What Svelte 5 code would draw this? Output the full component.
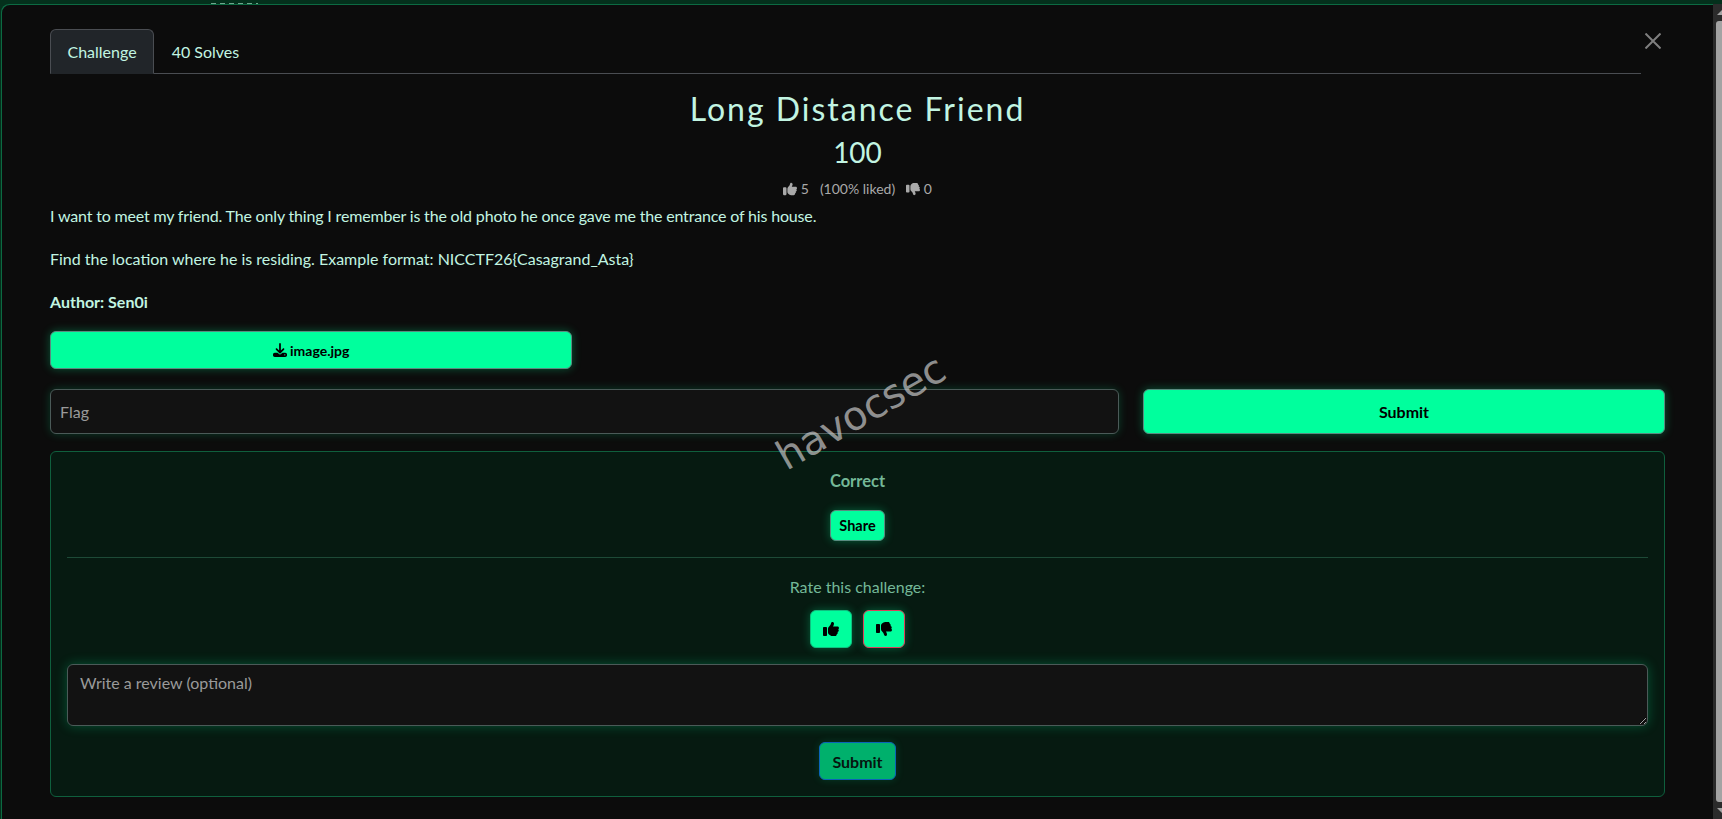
<script>
  let flag = $state('');
  let review = $state('');
</script>

{#snippet thumbUp()}
  <svg class="fa" viewBox="0 0 512 512" aria-hidden="true"><path d="M313.4 32.9c26 5.2 42.9 30.5 37.7 56.5l-2.3 11.4c-5.3 26.7-15.1 52.1-28.8 75.2H464c26.5 0 48 21.5 48 48c0 18.5-10.5 34.6-25.9 42.6C497 275.4 504 288.9 504 304c0 23.4-16.8 42.9-38.9 47.1c4.4 7.3 6.9 15.8 6.9 24.9c0 21.3-13.9 39.4-33.1 45.6c.7 3.3 1.1 6.8 1.1 10.4c0 26.5-21.5 48-48 48H294.5c-19 0-37.5-5.6-53.3-16.1l-38.5-25.7C176 420.4 160 390.4 160 358.3V320 272 247.1c0-29.2 13.3-56.7 36-75l7.4-5.9c26.5-21.2 44.6-51 51.2-84.2l2.3-11.4c5.2-26 30.5-42.9 56.5-37.7zM32 192H96c17.7 0 32 14.3 32 32V448c0 17.7-14.3 32-32 32H32c-17.7 0-32-14.3-32-32V224c0-17.7 14.3-32 32-32z"/></svg>
{/snippet}

{#snippet thumbDown()}
  <svg class="fa" viewBox="0 0 512 512" aria-hidden="true"><path d="M313.4 479.1c26-5.2 42.9-30.5 37.7-56.5l-2.3-11.4c-5.3-26.7-15.1-52.1-28.8-75.2H464c26.5 0 48-21.5 48-48c0-18.5-10.5-34.6-25.9-42.6C497 236.6 504 223.1 504 208c0-23.4-16.8-42.9-38.9-47.1c4.4-7.3 6.9-15.8 6.9-24.9c0-21.3-13.9-39.4-33.1-45.6c.7-3.3 1.1-6.8 1.1-10.4c0-26.5-21.5-48-48-48H294.5c-19 0-37.5 5.6-53.3 16.1L202.7 73.8C176 91.6 160 121.6 160 153.7V192v48 24.9c0 29.2 13.3 56.7 36 75l7.4 5.9c26.5 21.2 44.6 51 51.2 84.2l2.3 11.4c5.2 26 30.5 42.9 56.5 37.7zM32 384H96c17.7 0 32-14.3 32-32V128c0-17.7-14.3-32-32-32H32C14.3 96 0 110.3 0 128V352c0 17.7 14.3 32 32 32z"/></svg>
{/snippet}

<div class="page">
  <span class="peek"></span>
  <div class="modal">
    <button class="close" aria-label="Close">
      <svg viewBox="0 0 16 16" aria-hidden="true"><path d="M0.5 0.5 15.5 15.5M15.5 0.5 0.5 15.5" /></svg>
    </button>

    <nav class="tabs">
      <span class="tab active">Challenge</span>
      <span class="tab">40 Solves</span>
    </nav>

    <h1>Long Distance Friend</h1>
    <h2>100</h2>
    <div class="votes">
      <span class="count">{@render thumbUp()} 5</span>
      <span>(100% liked)</span>
      <span class="count">{@render thumbDown()} 0</span>
    </div>

    <p class="intro">I want to meet my friend. The only thing I remember is the old photo he once gave me the entrance of his house.</p>
    <p>Find the location where he is residing. Example format: NICCTF26&#123;Casagrand_Asta&#125;</p>
    <p><strong>Author: Sen0i</strong></p>

    <div class="files">
      <button class="btn download">
        <svg class="fa" viewBox="0 0 512 512" aria-hidden="true"><path d="M288 32c0-17.7-14.3-32-32-32s-32 14.3-32 32V274.7l-73.4-73.4c-12.5-12.5-32.8-12.5-45.3 0s-12.5 32.8 0 45.3l128 128c12.5 12.5 32.8 12.5 45.3 0l128-128c12.5-12.5 12.5-32.8 0-45.3s-32.8-12.5-45.3 0L288 274.7V32zM64 352c-35.3 0-64 28.7-64 64v32c0 35.3 28.7 64 64 64H448c35.3 0 64-28.7 64-64V416c0-35.3-28.7-64-64-64H346.5l-45.3 45.3c-25 25-65.5 25-90.5 0L165.5 352H64zm368 56a24 24 0 1 1 0 48 24 24 0 1 1 0-48z"/></svg>
        image.jpg
      </button>
    </div>

    <div class="flag-row">
      <input class="field flag" placeholder="Flag" bind:value={flag} />
      <button class="btn submit">Submit</button>
    </div>

    <section class="result">
      <div class="correct">Correct</div>
      <button class="btn share">Share</button>
      <hr />
      <div class="rate-label">Rate this challenge:</div>
      <div class="rate">
        <button class="btn rate-btn" aria-label="Like">{@render thumbUp()}</button>
        <button class="btn rate-btn down" aria-label="Dislike">{@render thumbDown()}</button>
      </div>
      <textarea class="field review" placeholder="Write a review (optional)" bind:value={review}></textarea>
      <button class="btn review-submit">Submit</button>
    </section>

    <div class="watermark">havocsec</div>
  </div>

  <div class="scrollbar">
    <span class="arrow up"></span>
    <span class="thumb"></span>
    <span class="arrow dn"></span>
  </div>
</div>

<style>
  :global(body) {
    margin: 0;
    background: #04301c;
    overflow: hidden;
  }

  .page {
    position: relative;
    display: flex;
    height: 819px;
    padding: 4px 0 0 1px;
    box-sizing: border-box;
    font-family: Lato, "Open Sans", sans-serif;
    font-size: 16px;
    line-height: 24px;
    color: #c2f5e2;
  }

  /* bottom edge of the page text showing above the modal */
  .peek {
    position: absolute;
    top: 3px;
    left: 211px;
    width: 47px;
    height: 1px;
    background: repeating-linear-gradient(90deg, #6fa58d 0 5px, transparent 5px 9px);
  }

  .modal {
    position: relative;
    flex: 1;
    min-width: 0;
    box-sizing: border-box;
    padding: 25px 48px 0 49px;
    background: #0c0c0c;
    border-top-left-radius: 8px;
    box-shadow: inset 1px 1px 0 #0c6a42;
  }

  .close {
    position: absolute;
    top: 29px;
    right: 52px;
    width: 16px;
    height: 16px;
    padding: 0;
    border: 0;
    background: none;
  }

  .close svg {
    display: block;
    width: 16px;
    height: 16px;
    stroke: #7f7f7f;
    stroke-width: 2;
    fill: none;
  }

  .tabs {
    display: flex;
    margin-right: 24px;
    border-bottom: 1px solid #4a4d52;
  }

  .tab {
    padding: 8px 16.5px;
    margin-bottom: -1px;
    border: 1px solid transparent;
    border-radius: 6px 6px 0 0;
    font-size: 16px;
    line-height: 27px;
  }

  .tab.active {
    background: #212529;
    border-color: #4a4d52 #4a4d52 #212529;
  }

  h1 {
    margin: 16px 0 0;
    font-size: 32px;
    font-weight: 400;
    line-height: 38px;
    letter-spacing: 2px;
    text-align: center;
  }

  h2 {
    margin: 7px 0 0;
    font-size: 28px;
    font-weight: 400;
    line-height: 34px;
    text-align: center;
  }

  .votes {
    display: flex;
    justify-content: center;
    gap: 11px;
    margin: 9px 0 3px;
    font-size: 14px;
    line-height: 21px;
    color: #a9a9a9;
  }

  .fa {
    display: inline-block;
    width: 1em;
    height: 1em;
    fill: currentColor;
    vertical-align: -0.125em;
  }

  p {
    margin: 0 0 16px;
    font-size: 16px;
    line-height: 27px;
  }

  .intro {
    letter-spacing: -0.17px;
  }

  .files {
    width: 522px;
  }

  .btn {
    display: block;
    box-sizing: border-box;
    border: 1px solid #5a8a80;
    border-radius: 6px;
    background: #00ff9d;
    color: #000;
    font-family: inherit;
    font-weight: 700;
    padding: 0;
    box-shadow: 0 0 10px rgba(0, 255, 157, 0.3);
  }

  .download {
    width: 100%;
    height: 38px;
    font-size: 14px;
  }

  .flag-row {
    display: flex;
    gap: 24px;
    margin-top: 20px;
  }

  .field {
    display: block;
    box-sizing: border-box;
    border: 1px solid #4b5a58;
    border-radius: 6px;
    background: #121212;
    color: #c2f5e2;
    font-family: inherit;
    font-size: 16px;
    outline: none;
    box-shadow: 0 0 10px rgba(0, 255, 157, 0.2);
  }

  .field::placeholder {
    color: #9a9a9a;
    opacity: 1;
  }

  .flag {
    flex: 0 0 1069px;
    height: 45px;
    padding: 0 9px;
  }

  .submit {
    flex: 1;
    height: 45px;
    font-size: 16px;
  }

  .result {
    display: flex;
    flex-direction: column;
    align-items: center;
    box-sizing: border-box;
    height: 346px;
    margin-top: 17px;
    padding: 17px 16px 0;
    border: 1px solid #0f5f3d;
    border-radius: 6px;
    background: #061a11;
    color: #74b898;
  }

  .correct {
    font-weight: 700;
    font-size: 16.5px;
    line-height: 24px;
  }

  .share {
    width: 55px;
    height: 31px;
    margin-top: 17px;
    font-size: 14.5px;
  }

  hr {
    align-self: stretch;
    margin: 16px 0 0;
    border: 0;
    border-top: 1px solid #1d4a37;
  }

  .rate-label {
    margin-top: 17px;
    font-size: 16px;
  }

  .rate {
    display: flex;
    gap: 11px;
    margin-top: 11px;
  }

  .rate-btn {
    display: flex;
    align-items: center;
    justify-content: center;
    width: 42px;
    height: 38px;
    font-size: 16px;
    border-color: #0fc080;
  }

  .rate-btn.down {
    border-color: #dc3f5a;
  }

  .review {
    align-self: stretch;
    height: 62px;
    margin-top: 16px;
    padding: 6px 12px;
    line-height: 24px;
    font-size: 16px;
    box-shadow: 0 0 12px rgba(0, 255, 157, 0.25);
  }

  .review-submit {
    width: 77px;
    height: 38px;
    margin-top: 16px;
    font-size: 16px;
    background: #00b06c;
    color: #06150f;
    border-color: #0a63b8;
    box-shadow: 0 0 8px rgba(0, 255, 157, 0.15);
  }

  .watermark {
    position: absolute;
    top: 384px;
    left: 766px;
    font-family: "DejaVu Sans", sans-serif;
    font-size: 40px;
    line-height: 48px;
    color: rgba(200, 200, 200, 0.7);
    transform: rotate(-30deg);
    pointer-events: none;
  }

  .scrollbar {
    flex: 0 0 9px;
    display: flex;
    flex-direction: column;
    align-items: flex-end;
    background: #2b2b2b;
  }

  .arrow {
    width: 0;
    height: 0;
    margin: 6px 0 6px;
    border-left: 5px solid transparent;
  }

  .arrow.up {
    border-bottom: 5px solid #a3a3a3;
  }

  .arrow.dn {
    border-top: 5px solid #a3a3a3;
  }

  .thumb {
    flex: 1;
    width: 6px;
    border-radius: 3px 0 0 3px;
    background: #a3a3a3;
  }
</style>
